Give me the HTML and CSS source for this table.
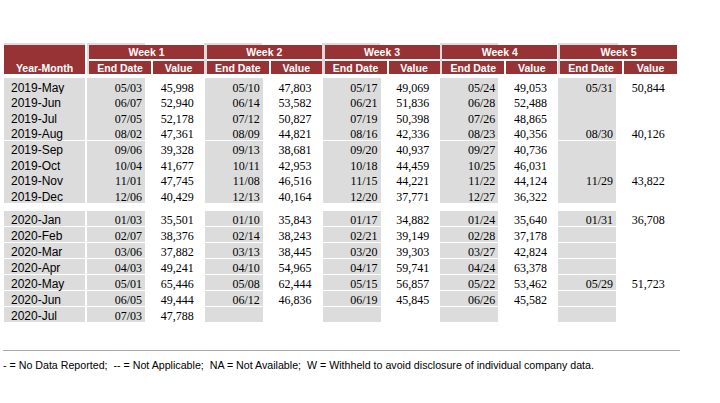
FILE: index.html
```html
<!DOCTYPE html>
<html>
<head>
<meta charset="utf-8">
<link rel="stylesheet" href="styles.css">
</head>
<body>
<div class="page">
  <div class="head">
    <div class="ym">Year-Month</div>
    <div class="wk"><div class="wt">Week 1</div><div class="sh">End Date</div><div class="sh">Value</div></div>
    <div class="wk"><div class="wt">Week 2</div><div class="sh">End Date</div><div class="sh">Value</div></div>
    <div class="wk"><div class="wt">Week 3</div><div class="sh">End Date</div><div class="sh">Value</div></div>
    <div class="wk"><div class="wt">Week 4</div><div class="sh">End Date</div><div class="sh">Value</div></div>
    <div class="wk"><div class="wt">Week 5</div><div class="sh">End Date</div><div class="sh">Value</div></div>
  </div>

  <div class="group g1">
    <div class="row"><div class="lab">2019-May</div><div class="d">05/03</div><div class="v">45,998</div><div class="d">05/10</div><div class="v">47,803</div><div class="d">05/17</div><div class="v">49,069</div><div class="d">05/24</div><div class="v">49,053</div><div class="d">05/31</div><div class="v">50,844</div></div>
    <div class="row"><div class="lab">2019-Jun</div><div class="d">06/07</div><div class="v">52,940</div><div class="d">06/14</div><div class="v">53,582</div><div class="d">06/21</div><div class="v">51,836</div><div class="d">06/28</div><div class="v">52,488</div><div class="d"></div><div class="v"></div></div>
    <div class="row"><div class="lab">2019-Jul</div><div class="d">07/05</div><div class="v">52,178</div><div class="d">07/12</div><div class="v">50,827</div><div class="d">07/19</div><div class="v">50,398</div><div class="d">07/26</div><div class="v">48,865</div><div class="d"></div><div class="v"></div></div>
    <div class="row"><div class="lab">2019-Aug</div><div class="d">08/02</div><div class="v">47,361</div><div class="d">08/09</div><div class="v">44,821</div><div class="d">08/16</div><div class="v">42,336</div><div class="d">08/23</div><div class="v">40,356</div><div class="d">08/30</div><div class="v">40,126</div></div>
    <div class="row"><div class="lab">2019-Sep</div><div class="d">09/06</div><div class="v">39,328</div><div class="d">09/13</div><div class="v">38,681</div><div class="d">09/20</div><div class="v">40,937</div><div class="d">09/27</div><div class="v">40,736</div><div class="d"></div><div class="v"></div></div>
    <div class="row"><div class="lab">2019-Oct</div><div class="d">10/04</div><div class="v">41,677</div><div class="d">10/11</div><div class="v">42,953</div><div class="d">10/18</div><div class="v">44,459</div><div class="d">10/25</div><div class="v">46,031</div><div class="d"></div><div class="v"></div></div>
    <div class="row"><div class="lab">2019-Nov</div><div class="d">11/01</div><div class="v">47,745</div><div class="d">11/08</div><div class="v">46,516</div><div class="d">11/15</div><div class="v">44,221</div><div class="d">11/22</div><div class="v">44,124</div><div class="d">11/29</div><div class="v">43,822</div></div>
    <div class="row"><div class="lab">2019-Dec</div><div class="d">12/06</div><div class="v">40,429</div><div class="d">12/13</div><div class="v">40,164</div><div class="d">12/20</div><div class="v">37,771</div><div class="d">12/27</div><div class="v">36,322</div><div class="d"></div><div class="v"></div></div>
  </div>

  <div class="group g2">
    <div class="row"><div class="lab">2020-Jan</div><div class="d">01/03</div><div class="v">35,501</div><div class="d">01/10</div><div class="v">35,843</div><div class="d">01/17</div><div class="v">34,882</div><div class="d">01/24</div><div class="v">35,640</div><div class="d">01/31</div><div class="v">36,708</div></div>
    <div class="row"><div class="lab">2020-Feb</div><div class="d">02/07</div><div class="v">38,376</div><div class="d">02/14</div><div class="v">38,243</div><div class="d">02/21</div><div class="v">39,149</div><div class="d">02/28</div><div class="v">37,178</div><div class="d"></div><div class="v"></div></div>
    <div class="row"><div class="lab">2020-Mar</div><div class="d">03/06</div><div class="v">37,882</div><div class="d">03/13</div><div class="v">38,445</div><div class="d">03/20</div><div class="v">39,303</div><div class="d">03/27</div><div class="v">42,824</div><div class="d"></div><div class="v"></div></div>
    <div class="row"><div class="lab">2020-Apr</div><div class="d">04/03</div><div class="v">49,241</div><div class="d">04/10</div><div class="v">54,965</div><div class="d">04/17</div><div class="v">59,741</div><div class="d">04/24</div><div class="v">63,378</div><div class="d"></div><div class="v"></div></div>
    <div class="row"><div class="lab">2020-May</div><div class="d">05/01</div><div class="v">65,446</div><div class="d">05/08</div><div class="v">62,444</div><div class="d">05/15</div><div class="v">56,857</div><div class="d">05/22</div><div class="v">53,462</div><div class="d">05/29</div><div class="v">51,723</div></div>
    <div class="row"><div class="lab">2020-Jun</div><div class="d">06/05</div><div class="v">49,444</div><div class="d">06/12</div><div class="v">46,836</div><div class="d">06/19</div><div class="v">45,845</div><div class="d">06/26</div><div class="v">45,582</div><div class="d"></div><div class="v"></div></div>
    <div class="row"><div class="lab">2020-Jul</div><div class="d">07/03</div><div class="v">47,788</div><div class="d"></div><div class="v"></div><div class="d"></div><div class="v"></div><div class="d"></div><div class="v"></div><div class="d"></div><div class="v"></div></div>
  </div>

  <div class="foot">
    <div class="rule"></div>
    <p class="note">- = No Data Reported;&nbsp; -- = Not Applicable;&nbsp; NA = Not Available;&nbsp; W = Withheld to avoid disclosure of individual company data.</p>
  </div>
</div>
</body>
</html>
```

FILE: styles.css
```css
html, body {
  margin: 0;
  padding: 0;
  background: #ffffff;
}

.page {
  padding: 43px 0 0 4px;
  width: 716px;
}

.head {
  display: grid;
  grid-template-columns: 82.25px 115px 115px 115px 115px 117px;
  column-gap: 2.75px;
  width: 673px;
  padding-top: 2px;
  background: linear-gradient(to right,
    #dcdcdc 0, #dcdcdc 81px,
    #ffffff 81px, #ffffff 83px,
    #dcdcdc 83px, #dcdcdc 141px,
    #ffffff 141px, #ffffff 200px,
    #dcdcdc 200px, #dcdcdc 258px,
    #ffffff 258px, #ffffff 318px,
    #dcdcdc 318px, #dcdcdc 376px,
    #ffffff 376px, #ffffff 436px,
    #dcdcdc 436px, #dcdcdc 494px,
    #ffffff 494px, #ffffff 554px,
    #dcdcdc 554px, #dcdcdc 614px,
    #ffffff 614px);
  font-family: "Liberation Sans", Arial, sans-serif;
  font-weight: bold;
  font-size: 10.5px;
  color: #ffffff;
}

.ym {
  width: 81px;
  height: 29px;
  background: #973335;
  display: flex;
  align-items: flex-end;
  justify-content: center;
  line-height: 12.3px;
}

.wk {
  display: grid;
  grid-template-columns: 62px 1fr;
  grid-template-rows: 14px 13.3px;
  gap: 2px;
  background: #ffffff;
}

.wt {
  grid-column: 1 / 3;
  background: #973335;
  text-align: center;
  line-height: 14px;
}

.sh {
  background: #973335;
  text-align: center;
  line-height: 12.3px;
  padding-top: 1px;
}

.group {
  display: flex;
  flex-direction: column;
}

.g1 {
  margin-top: 4px;
  row-gap: 1px;
}

.g1 .row {
  height: 14.6px;
}

.g2 {
  margin-top: 9px;
  row-gap: 1.1px;
}

.g2 .row {
  height: 14.9px;
}

.row {
  display: grid;
  grid-template-columns: 81px 2px repeat(5, 58px 59.75px);
  color: #000000;
  font-size: 12px;
  line-height: 12px;
}

.lab {
  grid-column: 1;
  background: #dcdcdc;
  font-family: "Liberation Sans", Arial, sans-serif;
  padding: 3.3px 0 0 7px;
  white-space: nowrap;
}

.lab + .d {
  grid-column: 3;
}

.d {
  background: #dcdcdc;
  font-family: "Liberation Serif", "Times New Roman", serif;
  text-align: right;
  padding: 3.3px 3px 0 0;
}

.v {
  background: #ffffff;
  font-family: "Liberation Serif", "Times New Roman", serif;
  text-align: right;
  padding: 3.3px 11px 0 0;
}

.foot {
  margin-top: 28px;
}

.rule {
  width: 677px;
  height: 1px;
  margin-left: -1px;
  background: #a8a8a8;
}

.note {
  margin: 8px 0 0 -1px;
  font-family: "Liberation Sans", Arial, sans-serif;
  font-size: 10.67px;
  color: #000000;
  white-space: nowrap;
}
```
